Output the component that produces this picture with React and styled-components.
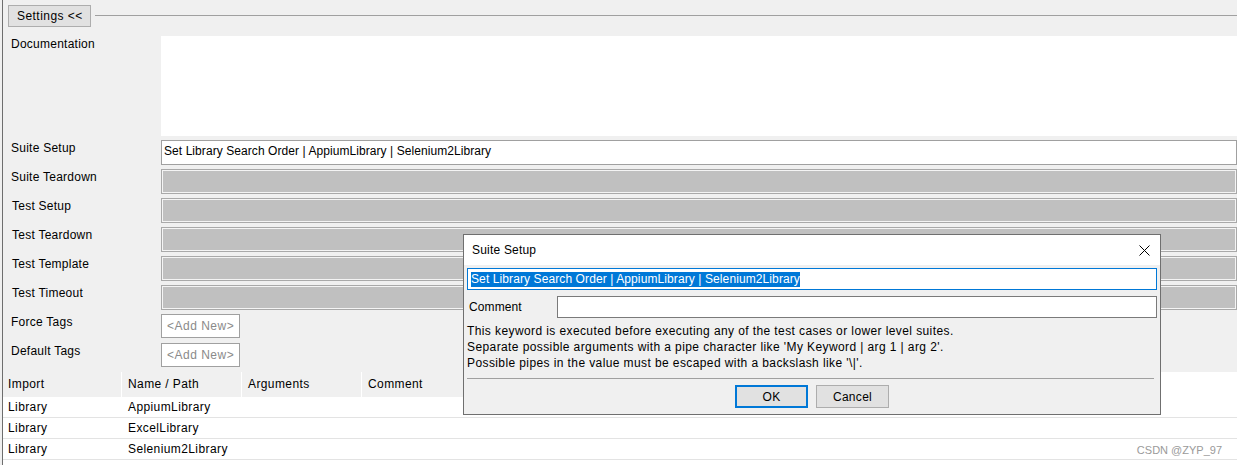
import React from 'react';
import styled, { createGlobalStyle } from 'styled-components';

const Global = createGlobalStyle`
  html, body { margin: 0; padding: 0; background: #f0f0f0; }
  body {
    font-family: "Liberation Sans", Arial, sans-serif;
    font-size: 12px;
    letter-spacing: 0.3px;
    color: #000;
  }
  * { box-sizing: border-box; }
`;

const Window = styled.div`
  position: relative;
  width: 1237px;
  height: 465px;
  overflow: hidden;
  background: #f0f0f0;
  padding-left: 2px;
`;

const Panel = styled.div`
  height: 100%;
  border-left: 1px solid #6e6e6e;
  display: flex;
  flex-direction: column;
`;

const TopBar = styled.div`
  display: flex;
  align-items: flex-start;
  gap: 4px;
  padding: 5px 0 0 5px;
  height: 27px;
`;

const ToggleButton = styled.div`
  width: 83px;
  height: 22px;
  padding-left: 8px;
  line-height: 20px;
  letter-spacing: 0.45px;
  background: #e1e1e1;
  border: 1px solid #adadad;
  white-space: nowrap;
`;

const Rule = styled.div`
  flex: 1;
  margin-top: 10px;
  height: 1px;
  background: #a0a0a0;
`;

const Form = styled.div`
  display: grid;
  grid-template-columns: 158px 1fr;
  row-gap: 4px;
  margin-top: 9px;
`;

const Label = styled.div`
  padding: 1px 0 0 ${(p) => (p.$inset ? 9 : 8)}px;
  line-height: 14px;
  letter-spacing: 0.25px;
  white-space: nowrap;
`;

const DocArea = styled.div`
  height: 100px;
  background: #fff;
`;

const TextField = styled.div`
  height: 25px;
  background: #fff;
  border: 1px solid #a0a0a0;
  padding: 2px 0 0 2px;
  line-height: 16px;
  letter-spacing: 0.07px;
  white-space: nowrap;
`;

const DisabledField = styled.div`
  height: 25px;
  background: #c0c0c0;
  border: 1px solid #a9a9a9;
  box-shadow: inset 0 0 0 1px #f4f4f4;
`;

const TagCell = styled.div`
  height: 25px;
`;

const AddNew = styled.div`
  width: 79px;
  height: 24px;
  background: #fff;
  border: 1px solid #a0a0a0;
  color: #8a8a8a;
  padding-left: 5px;
  line-height: 22px;
  letter-spacing: 0.5px;
  white-space: nowrap;
`;

const Table = styled.div`
  margin-top: 4px;
  flex: 1;
  display: flex;
  flex-direction: column;
  letter-spacing: 0.4px;
`;

const cols = '118px 120px 120px 120px 1fr';

const HeaderRow = styled.div`
  display: grid;
  grid-template-columns: ${cols};
  height: 25px;
  background: #fff;
`;

const HeaderCell = styled.div`
  background: #f0f0f0;
  border-left: ${(p) => (p.$first ? 'none' : '1px solid #ffffff')};
  padding-left: ${(p) => (p.$first ? 5 : 6)}px;
  line-height: 25px;
  white-space: nowrap;
`;

const Body = styled.div`
  flex: 1;
  background: #fff;
`;

const Row = styled.div`
  display: grid;
  grid-template-columns: ${cols};
  height: 21px;
  border-bottom: 1px solid #e3e3e3;
`;

const Cell = styled.div`
  padding-left: ${(p) => (p.$first ? 5 : 7)}px;
  line-height: 20px;
  white-space: nowrap;
`;

const Dialog = styled.div`
  position: absolute;
  left: 463px;
  top: 234px;
  width: 698px;
  height: 181px;
  border: 1px solid #6f6f6f;
  background: #f0f0f0;
  display: flex;
  flex-direction: column;
`;

const TitleBar = styled.div`
  height: 30px;
  background: #fff;
  display: flex;
  align-items: center;
  justify-content: space-between;
  padding: 0 10px 0 8px;
  letter-spacing: 0.2px;
`;

const DialogBody = styled.div`
  padding: 3px 3px 5px;
  display: flex;
  flex-direction: column;
`;

const ValueInput = styled.div`
  height: 22px;
  background: #fff;
  border: 1px solid #0078d7;
  padding-left: 3px;
  display: flex;
  align-items: center;
  letter-spacing: 0.1px;
  white-space: nowrap;
`;

const Selected = styled.span`
  background: #0078d7;
  color: #fff;
  line-height: 15px;
`;

const CommentRow = styled.div`
  display: flex;
  align-items: center;
  margin-top: 6px;
`;

const CommentLabel = styled.div`
  width: 90px;
  padding-left: 2px;
  letter-spacing: 0.1px;
`;

const CommentInput = styled.div`
  flex: 1;
  height: 22px;
  background: #fff;
  border: 1px solid #7a7a7a;
`;

const Help = styled.div`
  margin-top: 5px;
  line-height: 16px;
  letter-spacing: 0.4px;
  white-space: nowrap;
`;

const Separator = styled.div`
  margin: 7px 3px 0 0;
  height: 1px;
  background: #a0a0a0;
`;

const Buttons = styled.div`
  display: flex;
  justify-content: center;
  gap: 8px;
  margin-top: 6px;
`;

const DlgButton = styled.div`
  width: 73px;
  height: 23px;
  background: #e1e1e1;
  border: ${(p) => (p.$default ? '2px solid #0078d7' : '1px solid #adadad')};
  display: flex;
  align-items: center;
  justify-content: center;
`;

const Watermark = styled.div`
  position: absolute;
  right: 15px;
  bottom: 8px;
  font-size: 11px;
  line-height: 13px;
  letter-spacing: 0;
  color: #9a9a9a;
`;

const CloseIcon = () => (
  <svg width="11" height="11" viewBox="0 0 11 11">
    <path d="M0.5 0.5 L10.5 10.5 M10.5 0.5 L0.5 10.5" stroke="#000" strokeWidth="1" fill="none" />
  </svg>
);

const settingRows = [
  { label: 'Suite Setup', value: 'Set Library Search Order | AppiumLibrary | Selenium2Library' },
  { label: 'Suite Teardown' },
  { label: 'Test Setup', inset: true },
  { label: 'Test Teardown', inset: true },
  { label: 'Test Template', inset: true },
  { label: 'Test Timeout', inset: true },
];

const imports = [
  ['Library', 'AppiumLibrary'],
  ['Library', 'ExcelLibrary'],
  ['Library', 'Selenium2Library'],
];

export default function App() {
  return (
    <>
      <Global />
      <Window>
        <Panel>
          <TopBar>
            <ToggleButton>Settings &lt;&lt;</ToggleButton>
            <Rule />
          </TopBar>
          <Form>
            <Label>Documentation</Label>
            <DocArea />
            {settingRows.map((r) => (
              <React.Fragment key={r.label}>
                <Label $inset={r.inset}>{r.label}</Label>
                {r.value ? <TextField>{r.value}</TextField> : <DisabledField />}
              </React.Fragment>
            ))}
            <Label>Force Tags</Label>
            <TagCell>
              <AddNew>&lt;Add New&gt;</AddNew>
            </TagCell>
            <Label>Default Tags</Label>
            <TagCell>
              <AddNew>&lt;Add New&gt;</AddNew>
            </TagCell>
          </Form>
          <Table>
            <HeaderRow>
              <HeaderCell $first>Import</HeaderCell>
              <HeaderCell>Name / Path</HeaderCell>
              <HeaderCell>Arguments</HeaderCell>
              <HeaderCell>Comment</HeaderCell>
            </HeaderRow>
            <Body>
              {imports.map(([type, name]) => (
                <Row key={name}>
                  <Cell $first>{type}</Cell>
                  <Cell>{name}</Cell>
                  <Cell />
                  <Cell />
                  <Cell />
                </Row>
              ))}
            </Body>
          </Table>
        </Panel>

        <Dialog>
          <TitleBar>
            <span>Suite Setup</span>
            <CloseIcon />
          </TitleBar>
          <DialogBody>
            <ValueInput>
              <Selected>Set Library Search Order | AppiumLibrary | Selenium2Library</Selected>
            </ValueInput>
            <CommentRow>
              <CommentLabel>Comment</CommentLabel>
              <CommentInput />
            </CommentRow>
            <Help>
              This keyword is executed before executing any of the test cases or lower level suites.
              <br />
              Separate possible arguments with a pipe character like 'My Keyword | arg 1 | arg 2'.
              <br />
              Possible pipes in the value must be escaped with a backslash like '\|'.
            </Help>
            <Separator />
            <Buttons>
              <DlgButton $default>OK</DlgButton>
              <DlgButton>Cancel</DlgButton>
            </Buttons>
          </DialogBody>
        </Dialog>

        <Watermark>CSDN @ZYP_97</Watermark>
      </Window>
    </>
  );
}
